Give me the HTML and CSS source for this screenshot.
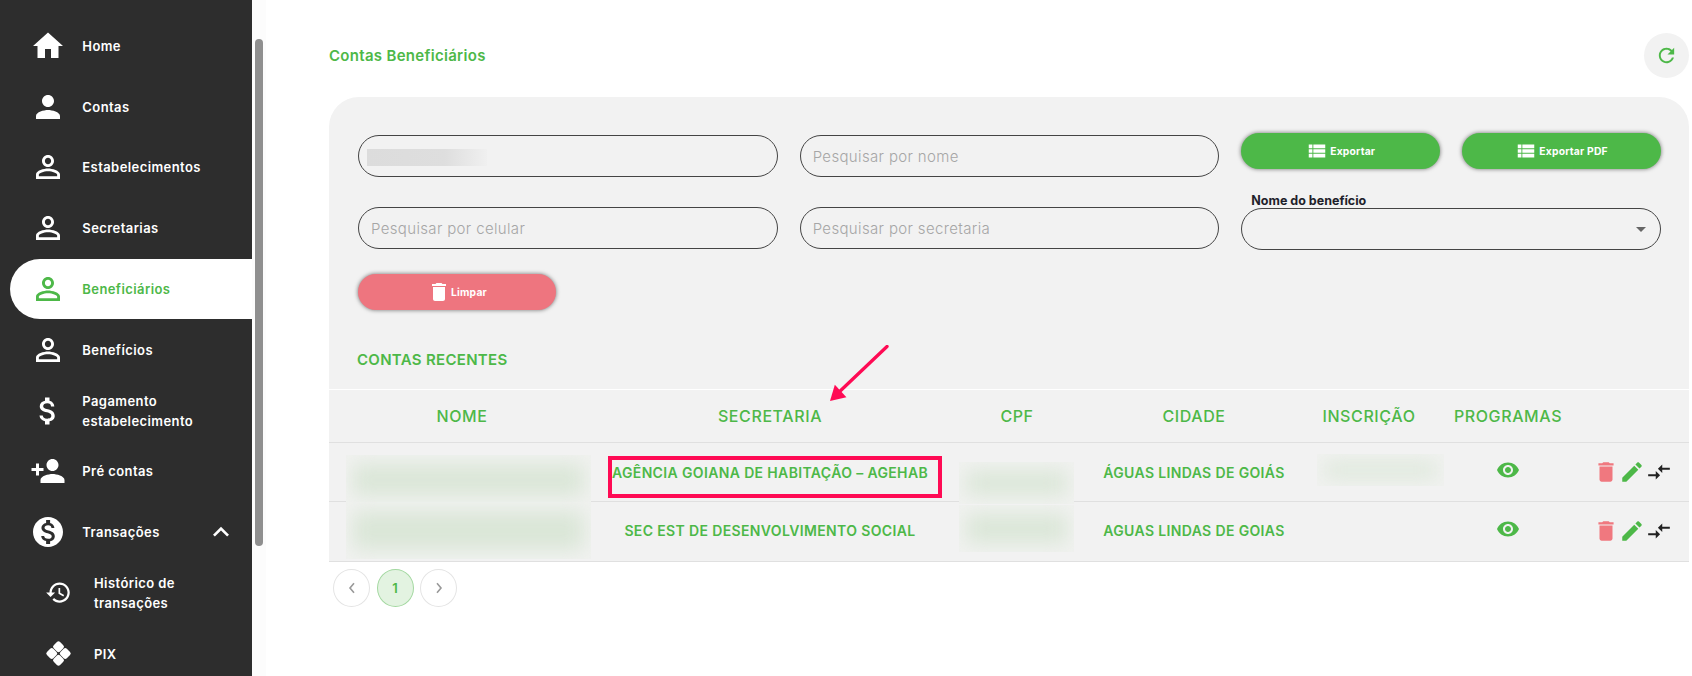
FILE: index.html
```html
<!DOCTYPE html>
<html lang="pt-BR">
<head>
    <meta charset="UTF-8">
    <meta name="viewport" content="width=device-width, initial-scale=1.0">
    <title>Contas Beneficiários</title>
    <link rel="stylesheet" href="styles.css">
</head>
<body>

    <svg class="icon-defs" aria-hidden="true">
        <symbol id="i-home" viewBox="0 0 24 24"><path d="M10 20v-6h4v6h5v-8h3L12 3 2 12h3v8z"/></symbol>
        <symbol id="i-person" viewBox="0 0 24 24"><path d="M12 12c2.21 0 4-1.79 4-4s-1.79-4-4-4-4 1.79-4 4 1.79 4 4 4zm0 2c-2.67 0-8 1.34-8 4v2h16v-2c0-2.66-5.33-4-8-4z"/></symbol>
        <symbol id="i-person-outline" viewBox="0 0 24 24"><path d="M12 5.9c1.16 0 2.1.94 2.1 2.1s-.94 2.1-2.1 2.1S9.9 9.16 9.9 8s.94-2.1 2.1-2.1m0 9c2.97 0 6.1 1.46 6.1 2.1v1.1H5.9V17c0-.64 3.13-2.1 6.1-2.1M12 4C9.79 4 8 5.79 8 8s1.79 4 4 4 4-1.79 4-4-1.79-4-4-4zm0 9c-2.67 0-8 1.34-8 4v3h16v-3c0-2.66-5.33-4-8-4z"/></symbol>
        <symbol id="i-money" viewBox="0 0 24 24"><path d="M11.8 10.9c-2.27-.59-3-1.2-3-2.15 0-1.09 1.01-1.85 2.7-1.85 1.78 0 2.44.85 2.5 2.1h2.21c-.07-1.72-1.12-3.3-3.21-3.81V3h-3v2.16c-1.94.42-3.5 1.68-3.5 3.61 0 2.31 1.91 3.46 4.7 4.13 2.5.6 3 1.48 3 2.41 0 .69-.49 1.79-2.7 1.79-2.06 0-2.87-.92-2.98-2.1h-2.2c.12 2.19 1.76 3.42 3.68 3.83V21h3v-2.15c1.95-.37 3.5-1.5 3.5-3.55 0-2.84-2.43-3.81-4.7-4.4z"/></symbol>
        <symbol id="i-person-add" viewBox="0 0 24 24"><path d="M15 12c2.21 0 4-1.79 4-4s-1.79-4-4-4-4 1.79-4 4 1.79 4 4 4zm-9-2V7H4v3H1v2h3v3h2v-3h3v-2H6zm9 4c-2.67 0-8 1.34-8 4v2h16v-2c0-2.66-5.33-4-8-4z"/></symbol>
        <symbol id="i-monetization" viewBox="0 0 24 24"><path d="M12 2C6.48 2 2 6.48 2 12s4.48 10 10 10 10-4.48 10-10S17.52 2 12 2zm1.41 16.09V20h-2.67v-1.93c-1.71-.36-3.16-1.46-3.27-3.4h1.96c.1 1.05.82 1.87 2.65 1.87 1.96 0 2.4-.98 2.4-1.59 0-.83-.44-1.61-2.67-2.14-2.48-.6-4.18-1.62-4.18-3.67 0-1.72 1.39-2.84 3.11-3.21V4h2.67v1.95c1.86.45 2.79 1.86 2.85 3.39H14.3c-.05-1.11-.64-1.87-2.22-1.87-1.5 0-2.4.68-2.4 1.64 0 .84.65 1.39 2.67 1.91s4.18 1.39 4.18 3.91c-.01 1.83-1.38 2.83-3.12 3.16z"/></symbol>
        <symbol id="i-expand-less" viewBox="0 0 24 24"><path d="M12 8l-6 6 1.41 1.41L12 10.83l4.59 4.58L18 14z"/></symbol>
        <symbol id="i-history" viewBox="0 0 24 24"><path d="M13 3c-4.97 0-9 4.03-9 9H1l3.89 3.89.07.14L9 12H6c0-3.87 3.13-7 7-7s7 3.13 7 7-3.13 7-7 7c-1.93 0-3.68-.79-4.94-2.06l-1.42 1.42C8.27 19.99 10.51 21 13 21c4.97 0 9-4.03 9-9s-4.03-9-9-9zm-1 5v5l4.28 2.54.72-1.21-3.5-2.08V8H12z"/></symbol>
        <symbol id="i-pix" viewBox="0 0 24 24">
            <rect x="8" y="2" width="8" height="8" rx="2" transform="rotate(45 12 6)"/>
            <rect x="8" y="14" width="8" height="8" rx="2" transform="rotate(45 12 18)"/>
            <rect x="2" y="8" width="8" height="8" rx="2" transform="rotate(45 6 12)"/>
            <rect x="14" y="8" width="8" height="8" rx="2" transform="rotate(45 18 12)"/>
        </symbol>
        <symbol id="i-refresh" viewBox="0 0 24 24"><path d="M17.65 6.35C16.2 4.9 14.21 4 12 4c-4.42 0-7.99 3.58-7.99 8s3.57 8 7.99 8c3.73 0 6.84-2.55 7.73-6h-2.08c-.82 2.33-3.04 4-5.65 4-3.31 0-6-2.69-6-6s2.69-6 6-6c1.66 0 3.14.69 4.22 1.78L13 11h7V4l-2.35 2.35z"/></symbol>
        <symbol id="i-list" viewBox="0 0 24 24"><path d="M3 14h4v-4H3v4zm0 5h4v-4H3v4zM3 9h4V5H3v4zm5 5h13v-4H8v4zm0 5h13v-4H8v4zM8 5v4h13V5H8z"/></symbol>
        <symbol id="i-delete" viewBox="0 0 24 24"><path d="M6 19c0 1.1.9 2 2 2h8c1.1 0 2-.9 2-2V7H6v12zM19 4h-3.5l-1-1h-5l-1 1H5v2h14V4z"/></symbol>
        <symbol id="i-edit" viewBox="0 0 24 24"><path d="M3 17.25V21h3.75L17.81 9.94l-3.75-3.75L3 17.25zM20.71 7.04c.39-.39.39-1.02 0-1.41l-2.34-2.34c-.39-.39-1.02-.39-1.41 0l-1.83 1.83 3.75 3.75 1.83-1.83z"/></symbol>
        <symbol id="i-compare" viewBox="0 0 24 24"><path d="M9.01 14H2v2h7.01v3L13 15l-3.99-4v3zm5.98-1v-3H22V8h-7.01V5L11 9l3.99 4z"/></symbol>
        <symbol id="i-eye" viewBox="0 0 24 24"><path d="M12 4.5C7 4.5 2.73 7.61 1 12c1.73 4.39 6 7.5 11 7.5s9.27-3.11 11-7.5c-1.73-4.39-6-7.5-11-7.5zM12 17c-2.76 0-5-2.24-5-5s2.24-5 5-5 5 2.24 5 5-2.24 5-5 5zm0-8c-1.66 0-3 1.34-3 3s1.34 3 3 3 3-1.34 3-3-1.34-3-3-3z"/></symbol>
    </svg>

    <div class="app">
        <nav class="sidebar">
            <a class="nav-item"><svg class="nav-icon"><use href="#i-home"/></svg><span>Home</span></a>
            <a class="nav-item"><svg class="nav-icon"><use href="#i-person"/></svg><span>Contas</span></a>
            <a class="nav-item"><svg class="nav-icon"><use href="#i-person-outline"/></svg><span>Estabelecimentos</span></a>
            <a class="nav-item"><svg class="nav-icon"><use href="#i-person-outline"/></svg><span>Secretarias</span></a>
            <a class="nav-item active"><svg class="nav-icon"><use href="#i-person-outline"/></svg><span>Beneficiários</span></a>
            <a class="nav-item"><svg class="nav-icon"><use href="#i-person-outline"/></svg><span>Benefícios</span></a>
            <a class="nav-item"><svg class="nav-icon"><use href="#i-money"/></svg><span>Pagamento<br>estabelecimento</span></a>
            <a class="nav-item"><svg class="nav-icon"><use href="#i-person-add"/></svg><span>Pré contas</span></a>
            <a class="nav-item"><svg class="nav-icon"><use href="#i-monetization"/></svg><span>Transações</span><svg class="nav-chevron"><use href="#i-expand-less"/></svg></a>
            <a class="nav-item sub"><svg class="nav-icon"><use href="#i-history"/></svg><span>Histórico de<br>transações</span></a>
            <a class="nav-item sub"><svg class="nav-icon"><use href="#i-pix"/></svg><span>PIX</span></a>
        </nav>
        <div class="scroll-track"><div class="scroll-thumb"></div></div>

        <main class="content">
            <header class="page-head">
                <h1>Contas Beneficiários</h1>
                <button class="refresh" type="button"><svg><use href="#i-refresh"/></svg></button>
            </header>

            <section class="panel">
                <div class="filters">
                    <div class="field">
                        <input type="text" aria-label="Pesquisar por CPF">
                        <div class="field-blur"></div>
                    </div>
                    <input type="text" placeholder="Pesquisar por nome">
                    <div class="export-buttons">
                        <button class="btn btn-green" type="button"><svg><use href="#i-list"/></svg>Exportar</button>
                        <button class="btn btn-green" type="button"><svg><use href="#i-list"/></svg>Exportar PDF</button>
                    </div>
                    <input type="text" placeholder="Pesquisar por celular">
                    <input type="text" placeholder="Pesquisar por secretaria">
                    <div class="select-field">
                        <label>Nome do benefício</label>
                        <div class="select-box"><span class="caret"></span></div>
                    </div>
                    <button class="btn btn-red" type="button"><svg><use href="#i-delete"/></svg>Limpar</button>
                </div>

                <h2>CONTAS RECENTES</h2>

                <table class="accounts">
                    <colgroup>
                        <col class="col-nome"><col class="col-secretaria"><col class="col-cpf"><col class="col-cidade"><col class="col-inscricao"><col class="col-programas"><col class="col-acoes">
                    </colgroup>
                    <thead>
                        <tr>
                            <th>NOME</th>
                            <th class="arrow-cell">SECRETARIA
                                <svg class="arrow" viewBox="0 0 62 60"><path d="M60 1.5 8 51" fill="none" stroke="#ff0a54" stroke-width="3.4" stroke-linecap="round"/><path d="M1 58 6 41 18 54z" fill="#ff0a54"/></svg>
                            </th>
                            <th>CPF</th>
                            <th>CIDADE</th>
                            <th>INSCRIÇÃO</th>
                            <th>PROGRAMAS</th>
                            <th></th>
                        </tr>
                    </thead>
                    <tbody>
                        <tr class="row-first">
                            <td><div class="blur blur-nome-1"></div></td>
                            <td class="mark-cell">AGÊNCIA GOIANA DE HABITAÇÃO – AGEHAB<div class="mark"></div></td>
                            <td><div class="blur blur-cpf-1"></div></td>
                            <td>ÁGUAS LINDAS DE GOIÁS</td>
                            <td><div class="blur blur-inscricao"></div></td>
                            <td><svg class="eye"><use href="#i-eye"/></svg></td>
                            <td><div class="actions"><svg class="red"><use href="#i-delete"/></svg><svg class="green"><use href="#i-edit"/></svg><svg class="dark"><use href="#i-compare"/></svg></div></td>
                        </tr>
                        <tr class="row-second">
                            <td><div class="blur blur-nome-2"></div></td>
                            <td>SEC EST DE DESENVOLVIMENTO SOCIAL</td>
                            <td><div class="blur blur-cpf-2"></div></td>
                            <td>AGUAS LINDAS DE GOIAS</td>
                            <td></td>
                            <td><svg class="eye"><use href="#i-eye"/></svg></td>
                            <td><div class="actions"><svg class="red"><use href="#i-delete"/></svg><svg class="green"><use href="#i-edit"/></svg><svg class="dark"><use href="#i-compare"/></svg></div></td>
                        </tr>
                    </tbody>
                </table>
            </section>

            <div class="pagination">
                <button type="button" class="page-btn">
                    <svg viewBox="0 0 24 24"><path d="M15 5l-6 7 6 7" fill="none" stroke="#999" stroke-width="2.4"/></svg>
                </button>
                <button type="button" class="page-btn current">1</button>
                <button type="button" class="page-btn">
                    <svg viewBox="0 0 24 24"><path d="M9 5l6 7-6 7" fill="none" stroke="#999" stroke-width="2.4"/></svg>
                </button>
            </div>
        </main>
    </div>

</body>
</html>
```

FILE: styles.css
```css
* {
    box-sizing: border-box;
}
html, body {
    height: 100%;
}
body {
    margin: 0;
    background: #fff;
    font-family: Inter, "Liberation Sans", sans-serif;
    color: #4db848;
    overflow: hidden;
}
.icon-defs {
    position: absolute;
    width: 0;
    height: 0;
}
.app {
    display: flex;
    height: 676px;
}

/* sidebar */
.sidebar {
    width: 252px;
    flex-shrink: 0;
    height: 676px;
    padding: 15.4px 0 0 10px;
    background: #2d2d2d;
    overflow: hidden;
}
.nav-item {
    display: flex;
    align-items: center;
    height: 60.8px;
    padding-left: 20px;
    color: #fff;
    font-size: 13px;
    font-weight: 600;
    line-height: 20px;
    letter-spacing: 0.42px;
}
.nav-item .nav-icon {
    width: 36px;
    height: 36px;
    margin-right: 16.3px;
    flex-shrink: 0;
    fill: #fff;
}
.nav-item.active {
    background: #fff;
    color: #4db848;
    border-radius: 31px 0 0 31px;
}
.nav-item.active .nav-icon {
    fill: #4db848;
}
.nav-chevron {
    width: 32px;
    height: 32px;
    margin-left: auto;
    margin-right: 15px;
    fill: #fff;
}
.nav-item.sub {
    padding-left: 35px;
}
.nav-item.sub .nav-icon {
    width: 27px;
    height: 27px;
    margin-right: 22px;
}
.scroll-track {
    width: 14px;
    flex-shrink: 0;
    padding: 39px 3px 0 3px;
    background: #fcfcfc;
}
.scroll-thumb {
    width: 8px;
    height: 507px;
    background: #8f8f8f;
    border-radius: 4px;
}

/* main */
.content {
    flex: 1;
    min-width: 0;
    padding: 33px 3px 0 63px;
}
.page-head {
    display: flex;
    justify-content: space-between;
    align-items: center;
    margin-bottom: 19px;
}
h1 {
    margin: 0 0 1px;
    font-size: 15px;
    font-weight: 600;
    letter-spacing: 0.3px;
}
.refresh {
    display: flex;
    align-items: center;
    justify-content: center;
    width: 45px;
    height: 45px;
    padding: 0;
    border: none;
    border-radius: 50%;
    background: #f2f2f2;
}
.refresh svg {
    width: 23px;
    height: 23px;
    fill: #4db848;
}
.panel {
    background: #f2f2f2;
    border-radius: 30px 30px 0 0;
    padding-top: 38px;
}
.filters {
    display: grid;
    grid-template-columns: repeat(3, 1fr);
    gap: 30px 22px;
    padding: 0 28px 0 29px;
}
.filters input,
.select-box {
    width: 100%;
    height: 42px;
    border: 1px solid #444;
    border-radius: 21px;
    background: transparent;
}
.filters input {
    padding: 0 12px;
    font-family: inherit;
    font-size: 15px;
    font-weight: 300;
    letter-spacing: 0.35px;
    outline: none;
}
.filters input::placeholder {
    color: #a6a6a6;
    opacity: 1;
}
.field {
    position: relative;
}
.field-blur {
    position: absolute;
    left: 9px;
    top: 14px;
    width: 120px;
    height: 17px;
    background: linear-gradient(to right, #dcdcdc, #dedede 65%, #f0f0f0);
}
.export-buttons {
    display: flex;
    gap: 22px;
    margin-top: -2px;
}
.btn {
    display: flex;
    align-items: center;
    justify-content: center;
    gap: 2px;
    height: 36px;
    padding: 0;
    border: none;
    border-radius: 18px;
    color: #fff;
    font-family: inherit;
    font-size: 10.3px;
    font-weight: 700;
    letter-spacing: 0.2px;
    box-shadow: 0 0 4px rgba(0, 0, 0, 0.55);
}
.btn svg {
    width: 22px;
    height: 22px;
    fill: #fff;
}
.btn-green {
    flex: 1;
    background: #4db848;
}
.btn-red {
    width: 198px;
    margin-top: -6px;
    background: #ee757f;
}
.btn-red svg {
    width: 24px;
    height: 24px;
    margin-right: -2px;
}
.select-field label {
    display: block;
    height: 15px;
    margin-top: -14px;
    padding-left: 10px;
    color: #1f1f2b;
    font-size: 12.5px;
    font-weight: 700;
    line-height: 15px;
}
.select-box {
    display: flex;
    align-items: center;
    justify-content: flex-end;
    padding-right: 14px;
}
.caret {
    width: 0;
    height: 0;
    border-left: 5px solid transparent;
    border-right: 5px solid transparent;
    border-top: 5px solid #666;
}
h2 {
    margin: 40px 0 19px 28px;
    font-size: 15px;
    font-weight: 600;
    line-height: 20px;
    letter-spacing: 0.3px;
}

/* table */
.accounts {
    width: 100%;
    table-layout: fixed;
    border-collapse: separate;
    border-spacing: 0;
}
.col-nome { width: 266px; }
.col-secretaria { width: 350px; }
.col-cpf { width: 144px; }
.col-cidade { width: 210px; }
.col-inscricao { width: 140px; }
.col-programas { width: 138px; }
.accounts th {
    height: 54px;
    border-top: 1.5px solid #fff;
    border-bottom: 1px solid #e0e0e0;
    font-size: 16px;
    font-weight: 500;
    letter-spacing: 0.6px;
    text-align: center;
}
.accounts td {
    position: relative;
    padding: 0;
    border-bottom: 1px solid #e0e0e0;
    font-size: 14px;
    font-weight: 600;
    letter-spacing: 0.36px;
    text-align: center;
}
.row-first td {
    height: 59px;
}
.row-second td {
    height: 60px;
    padding-bottom: 2px;
}
.arrow-cell,
.mark-cell {
    position: relative;
}
.arrow {
    position: absolute;
    left: 233px;
    top: -45px;
    width: 62px;
    height: 58px;
}
.mark {
    position: absolute;
    left: 13px;
    top: 13px;
    width: 334px;
    height: 42px;
    border: 4px solid #ff0a54;
}
.blur {
    position: absolute;
    overflow: hidden;
    background: #f1f2f0;
}
.blur::after {
    content: "";
    position: absolute;
    inset: 9px 7px;
    background: #dae6d7;
    filter: blur(10px);
}
.blur-nome-1 { left: 17px; right: 4px; top: 12px; bottom: -4px; }
.blur-nome-2 { left: 17px; right: 4px; top: 0; bottom: 2px; }
.blur-cpf-1 { left: 14px; right: 15px; top: 19px; bottom: -3px; }
.blur-cpf-2 { left: 14px; right: 15px; top: 3px; bottom: 9px; }
.blur-inscricao { left: 18px; right: -5px; top: 11px; bottom: 15px; }
.eye {
    display: block;
    width: 24px;
    height: 24px;
    margin: -4px auto 0;
    fill: #4db848;
}
.actions {
    display: flex;
    justify-content: center;
    gap: 0.5px;
    margin-left: -2px;
}
.actions svg {
    width: 26px;
    height: 26px;
}
.actions .red { fill: #f0787f; }
.actions .green { fill: #4db848; }
.actions .dark { fill: #222; }

/* pagination */
.pagination {
    display: flex;
    gap: 6.5px;
    margin: 7px 0 0 4px;
}
.page-btn {
    display: flex;
    align-items: center;
    justify-content: center;
    width: 37px;
    height: 38px;
    padding: 0;
    border: 1px solid #e4e4e4;
    border-radius: 50%;
    background: #fff;
    font-family: inherit;
    font-size: 13px;
    font-weight: 600;
    color: #4db848;
}
.page-btn svg {
    width: 16px;
    height: 16px;
}
.page-btn.current {
    background: #e3f3e1;
    border-color: #a3d8a0;
}
```
